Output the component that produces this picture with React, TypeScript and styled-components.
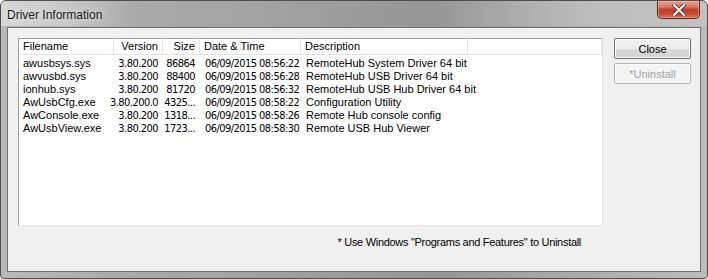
import { Fragment } from 'react';
import styled, { createGlobalStyle } from 'styled-components';

const GlobalStyle = createGlobalStyle`
  html, body {
    margin: 0;
    padding: 0;
    background: #ffffff;
  }
  body {
    font-family: "Liberation Sans", Arial, sans-serif;
    font-size: 11px;
    color: #000;
  }
`;

const Window = styled.div`
  box-sizing: border-box;
  width: 708px;
  height: 279px;
  display: flex;
  flex-direction: column;
  border: 1px solid #4e4e4e;
  border-radius: 6px 6px 4px 4px;
  background: linear-gradient(
    90deg,
    #b9b9b9 0%,
    #a8a8a8 20%,
    #9d9d9d 45%,
    #959595 62%,
    #a9a9a9 80%,
    #bcbcbc 100%
  );
  overflow: hidden;
`;

const TitleBar = styled.div`
  height: 25px;
  display: flex;
  align-items: flex-start;
  justify-content: space-between;
  padding-left: 6px;
  background: linear-gradient(
    90deg,
    rgba(225, 225, 225, 0.75) 0%,
    rgba(215, 215, 215, 0.55) 10%,
    rgba(190, 190, 190, 0.1) 18%,
    rgba(255, 255, 255, 0) 60%,
    rgba(220, 220, 220, 0.35) 85%,
    rgba(220, 220, 220, 0.2) 100%
  );
`;

const Title = styled.span`
  margin-top: 7px;
  font-family: "Liberation Sans", Arial, sans-serif;
  font-size: 12px;
  color: #1a1a1a;
  text-shadow: 0 0 6px rgba(255, 255, 255, 0.9);
`;

const CloseCaption = styled.div`
  width: 43px;
  height: 18px;
  margin-right: 7px;
  box-sizing: border-box;
  border: 1px solid #5a2a24;
  border-top: none;
  border-radius: 0 0 5px 5px;
  background: linear-gradient(
    180deg,
    #e3a291 0%,
    #d67a66 35%,
    #c43f28 50%,
    #c84a30 75%,
    #dd7456 100%
  );
  box-shadow: inset 0 0 0 1px rgba(255, 200, 190, 0.45);
  display: flex;
  align-items: center;
  justify-content: center;
`;

const Client = styled.div`
  flex: 1;
  margin: 1px 6px 6px 6px;
  border: 1px solid #6f6f6f;
  background: #f0f0f0;
  display: flex;
  flex-direction: column;
  padding: 10px 9px 0 10px;
`;

const TopRow = styled.div`
  display: flex;
  gap: 11px;
`;

const ListBox = styled.div`
  box-sizing: border-box;
  width: 585px;
  height: 188px;
  background: #fff;
  border: 1px solid #a0a0a0;
  border-right-color: #e3e3e3;
  border-bottom-color: #e3e3e3;
  overflow: hidden;
`;

const Grid = styled.div`
  display: grid;
  grid-template-columns: 95px 49px 37px 101px 167px 1fr;
`;

const HeaderCell = styled.div<{ $right?: boolean }>`
  height: 16px;
  line-height: 15px;
  box-sizing: border-box;
  padding: 0 4px;
  border-right: 1px solid #e3e3e3;
  border-bottom: 1px solid #e3e3e3;
  text-align: ${(p) => (p.$right ? 'right' : 'left')};
  white-space: nowrap;
  overflow: hidden;
`;

type Kind = 'text' | 'num' | 'date' | 'desc' | 'blank';

const cellPadding: Record<Kind, string> = {
  text: '0 4px 0 4px',
  num: '0 5px 0 0',
  date: '0 0 0 5px',
  desc: '0 0 0 5px',
  blank: '0',
};

const Cell = styled.div<{ $kind: Kind }>`
  height: 13px;
  line-height: 13px;
  padding: ${(p) => cellPadding[p.$kind]};
  display: flex;
  justify-content: ${(p) => (p.$kind === 'num' ? 'flex-end' : 'flex-start')};
  font-family: ${(p) =>
    p.$kind === 'num' || p.$kind === 'date'
      ? '"Liberation Sans Narrow", "DejaVu Sans Condensed", "Liberation Sans", sans-serif'
      : '"Liberation Sans", Arial, sans-serif'};
  letter-spacing: ${(p) => (p.$kind === 'num' || p.$kind === 'date' ? '-0.55px' : 'normal')};
  white-space: nowrap;
  overflow: ${(p) => (p.$kind === 'text' ? 'hidden' : 'visible')};
`;

const Spacer = styled.div`
  grid-column: 1 / -1;
  height: 2px;
`;

const ButtonColumn = styled.div`
  display: flex;
  flex-direction: column;
  gap: 4px;
`;

const Button = styled.button<{ $disabled?: boolean }>`
  width: 77px;
  height: 21px;
  box-sizing: border-box;
  padding: 0;
  font-family: "Liberation Sans", Arial, sans-serif;
  font-size: 11px;
  border-radius: 2px;
  border: 1px solid ${(p) => (p.$disabled ? '#b4b4b4' : '#707070')};
  background: ${(p) =>
    p.$disabled
      ? '#f4f4f4'
      : 'linear-gradient(180deg, #f2f2f2 0%, #ebebeb 50%, #dddddd 51%, #cfcfcf 100%)'};
  color: ${(p) => (p.$disabled ? '#a3a3a3' : '#000')};
  box-shadow: inset 0 0 0 1px ${(p) => (p.$disabled ? '#fbfbfb' : '#fcfcfc')};
`;

const Footnote = styled.div`
  display: flex;
  justify-content: flex-end;
  padding: 10px 110px 0 0;
  font-size: 11px;
  letter-spacing: -0.3px;
`;

const columns = ['Filename', 'Version', 'Size', 'Date & Time', 'Description', ''];
const rightCols = [false, true, true, false, false, false];
const kinds: Kind[] = ['text', 'num', 'num', 'date', 'desc', 'blank'];

const rows = [
  ['awusbsys.sys', '3.80.200', '86864', '06/09/2015 08:56:22', 'RemoteHub System Driver 64 bit'],
  ['awvusbd.sys', '3.80.200', '88400', '06/09/2015 08:56:28', 'RemoteHub USB Driver 64 bit'],
  ['ionhub.sys', '3.80.200', '81720', '06/09/2015 08:56:32', 'RemoteHub USB Hub Driver 64 bit'],
  ['AwUsbCfg.exe', '3.80.200.0', '4325...', '06/09/2015 08:58:22', 'Configuration Utility'],
  ['AwConsole.exe', '3.80.200', '1318...', '06/09/2015 08:58:26', 'Remote Hub console config'],
  ['AwUsbView.exe', '3.80.200', '1723...', '06/09/2015 08:58:30', 'Remote USB Hub Viewer'],
];

export default function App() {
  return (
    <>
      <GlobalStyle />
      <Window>
        <TitleBar>
          <Title>Driver Information</Title>
          <CloseCaption>
            <svg width="14" height="12" viewBox="0 0 14 12">
              <path
                d="M2 1 L12 11 M12 1 L2 11"
                stroke="#5b2b22"
                strokeWidth="4"
                strokeLinecap="square"
              />
              <path
                d="M2 1 L12 11 M12 1 L2 11"
                stroke="#ffffff"
                strokeWidth="2.2"
                strokeLinecap="square"
              />
            </svg>
          </CloseCaption>
        </TitleBar>
        <Client>
          <TopRow>
            <ListBox>
              <Grid>
                {columns.map((c, i) => (
                  <HeaderCell key={i} $right={rightCols[i]}>
                    {c}
                  </HeaderCell>
                ))}
                <Spacer />
                {rows.map((r) => (
                  <Fragment key={r[0]}>
                    {r.map((v, i) => (
                      <Cell key={i} $kind={kinds[i]}>
                        {v}
                      </Cell>
                    ))}
                    <Cell $kind="blank" />
                  </Fragment>
                ))}
              </Grid>
            </ListBox>
            <ButtonColumn>
              <Button>Close</Button>
              <Button $disabled>*Uninstall</Button>
            </ButtonColumn>
          </TopRow>
          <Footnote>* Use Windows "Programs and Features" to Uninstall</Footnote>
        </Client>
      </Window>
    </>
  );
}
